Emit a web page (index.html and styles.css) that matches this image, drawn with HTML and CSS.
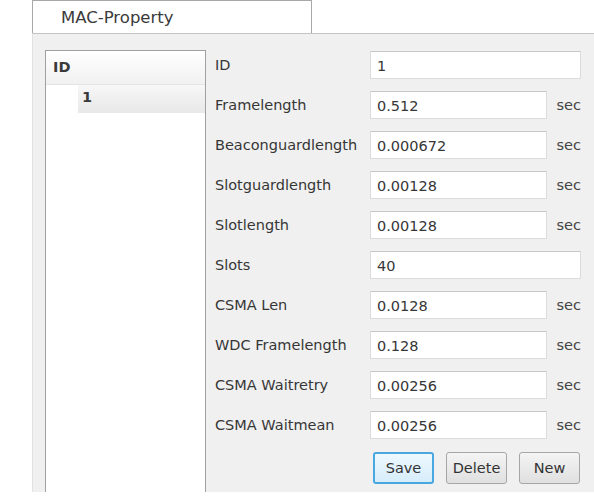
FILE: index.html
```html
<!DOCTYPE html>
<html lang="en">
<head>
  <meta charset="UTF-8">
  <meta name="viewport" content="width=device-width, initial-scale=1.0">
  <title>MAC-Property</title>
  <link rel="stylesheet" href="styles.css">
</head>
<body>
  <div class="window">
    <div class="tabbar">
      <div class="tab">MAC-Property</div>
    </div>
    <div class="panel">
      <div class="list">
        <div class="list-head">ID</div>
        <div class="list-item"><span>1</span></div>
      </div>
      <form class="props">
        <label>ID</label>
        <input class="wide" type="text" value="1">

        <label>Framelength</label>
        <input type="text" value="0.512">
        <span class="unit">sec</span>

        <label>Beaconguardlength</label>
        <input type="text" value="0.000672">
        <span class="unit">sec</span>

        <label>Slotguardlength</label>
        <input type="text" value="0.00128">
        <span class="unit">sec</span>

        <label>Slotlength</label>
        <input type="text" value="0.00128">
        <span class="unit">sec</span>

        <label>Slots</label>
        <input class="wide" type="text" value="40">

        <label>CSMA Len</label>
        <input type="text" value="0.0128">
        <span class="unit">sec</span>

        <label>WDC Framelength</label>
        <input type="text" value="0.128">
        <span class="unit">sec</span>

        <label>CSMA Waitretry</label>
        <input type="text" value="0.00256">
        <span class="unit">sec</span>

        <label>CSMA Waitmean</label>
        <input type="text" value="0.00256">
        <span class="unit">sec</span>

        <div class="actions">
          <button type="button" class="btn focused">Save</button>
          <button type="button" class="btn">Delete</button>
          <button type="button" class="btn">New</button>
        </div>
      </form>
    </div>
  </div>
</body>
</html>
```

FILE: styles.css
```css
body {
  margin: 0;
  background: #ffffff;
  font-family: "DejaVu Sans", Verdana, sans-serif;
  font-size: 14.5px;
  color: #333333;
}

.window {
  padding-left: 32px;
}

.tabbar {
  display: flex;
}

.tab {
  width: 280px;
  height: 33px;
  border: 1px solid #a8a8a8;
  border-bottom: none;
  background: #ffffff;
  box-sizing: border-box;
  padding: 7px 0 0 28px;
  font-size: 16.5px;
  color: #3a3a3a;
}

.panel {
  display: flex;
  align-items: flex-start;
  height: 459px;
  box-sizing: border-box;
  background: #f0f0f0;
  border-top: 1px solid #c4c4c4;
  border-left: 1px solid #e2e2e2;
  padding: 16px 0 0 12px;
}

.list {
  width: 161px;
  height: 443px;
  box-sizing: border-box;
  background: #ffffff;
  border: 1px solid #a0a0a0;
  border-bottom: none;
}

.list-head {
  height: 34px;
  box-sizing: border-box;
  padding: 8px 0 0 7px;
  background: linear-gradient(#ffffff, #f1f1f1);
  border-bottom: 1px solid #e4e4e4;
  font-weight: bold;
  color: #3a3a3a;
}

.list-item {
  height: 28px;
  padding-left: 32px;
}

.list-item span {
  display: block;
  height: 28px;
  box-sizing: border-box;
  padding: 4px 0 0 4px;
  background: linear-gradient(#f7f7f7, #e8e8e8);
  font-weight: bold;
  color: #3a3a3a;
}

.props {
  display: grid;
  grid-template-columns: 155px 177px 34px;
  grid-auto-rows: 28px;
  row-gap: 12px;
  align-items: center;
  margin: 1px 0 0 9px;
}

.props label {
  grid-column: 1;
  color: #363636;
}

.props input {
  grid-column: 2;
  height: 28px;
  box-sizing: border-box;
  border: 1px solid #dcdcdc;
  border-top-color: #c8c8c8;
  background: #ffffff;
  padding: 2px 6px 0;
  font-family: inherit;
  font-size: 14.5px;
  color: #363636;
}

.props input.wide {
  grid-column: 2 / span 2;
  width: 211px;
}

.unit {
  grid-column: 3;
  justify-self: end;
  color: #444444;
}

.actions {
  grid-column: 2 / span 2;
  display: flex;
  justify-content: flex-end;
  gap: 12px;
  height: 32px;
  margin-top: 5px;
  width: 210px;
}

.btn {
  width: 61px;
  height: 32px;
  border: 1px solid #a6a6a6;
  border-radius: 3px;
  background: linear-gradient(#f4f4f4, #e0e0e0);
  font-family: inherit;
  font-size: 14.5px;
  color: #333333;
  padding: 0;
}

.btn.focused {
  border: 2px solid #4aa8e0;
  background: linear-gradient(#eef8fe, #d6edfa);
}
```
